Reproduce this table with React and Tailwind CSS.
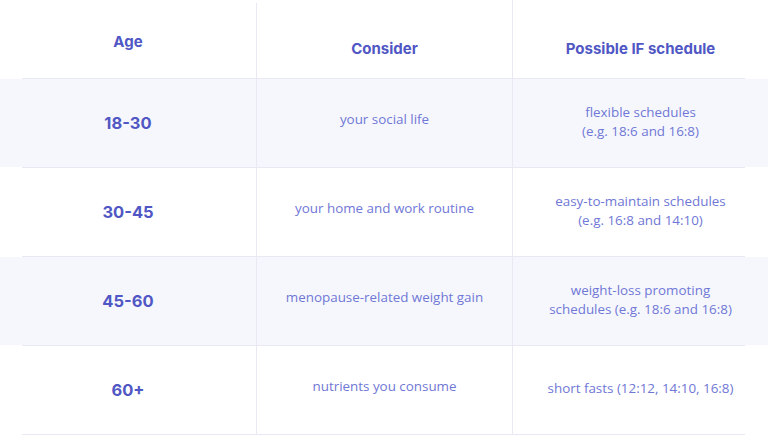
import React from "react";

const rows = [
  { age: "18-30", consider: "your social life", sched: ["flexible schedules", "(e.g. 18:6 and 16:8)"], shaded: true },
  { age: "30-45", consider: "your home and work routine", sched: ["easy-to-maintain schedules", "(e.g. 16:8 and 14:10)"], shaded: false },
  { age: "45-60", consider: "menopause-related weight gain", sched: ["weight-loss promoting", "schedules (e.g. 18:6 and 16:8)"], shaded: true },
  { age: "60+", consider: "nutrients you consume", sched: ["short fasts (12:12, 14:10, 16:8)"], shaded: false },
];

const head = { fontFamily: "Inter, 'Liberation Sans', sans-serif" };
const body = { fontFamily: "'Open Sans', 'Liberation Sans', sans-serif" };

function Line() {
  return (
    <div className="flex h-px">
      <div className="w-[22px]" />
      <div className="flex-1 bg-[#e8e9f3]" />
      <div className="w-[23px]" />
    </div>
  );
}

export default function App() {
  return (
    <div className="w-[768px] h-[436px] bg-white overflow-hidden">
      <div className="grid grid-cols-[256px_256px_256px] h-[78px] text-[#5057c4] font-bold text-[15px]" style={head}>
        <div className="flex justify-center pt-[31px]">Age</div>
        <div className="flex justify-center pt-[35px] border-l border-[#e8e9f3] mt-[3px]">Consider</div>
        <div className="flex justify-center pt-[38px] border-l border-[#e8e9f3]">Possible IF schedule</div>
      </div>
      {rows.map((r, i) => (
        <React.Fragment key={i}>
          <Line />
          <div className={`grid grid-cols-[256px_256px_256px] h-[88px] ${r.shaded ? "bg-[#f6f7fd]" : "bg-white"}`}>
            <div className="flex items-center justify-center text-[#5057c4] font-bold text-[16.5px]" style={head}>
              {r.age}
            </div>
            <div className="flex items-center justify-center border-l border-[#e8e9f3] text-[#7077d6] text-[13.4px] pb-[7px]" style={body}>
              {r.consider}
            </div>
            <div className="flex flex-col items-center justify-center border-l border-[#e8e9f3] text-[#7077d6] text-[13.4px] leading-[19px] pb-[3px] text-center" style={body}>
              {r.sched.map((s, j) => (
                <div key={j}>{s}</div>
              ))}
            </div>
          </div>
        </React.Fragment>
      ))}
      <Line />
    </div>
  );
}
